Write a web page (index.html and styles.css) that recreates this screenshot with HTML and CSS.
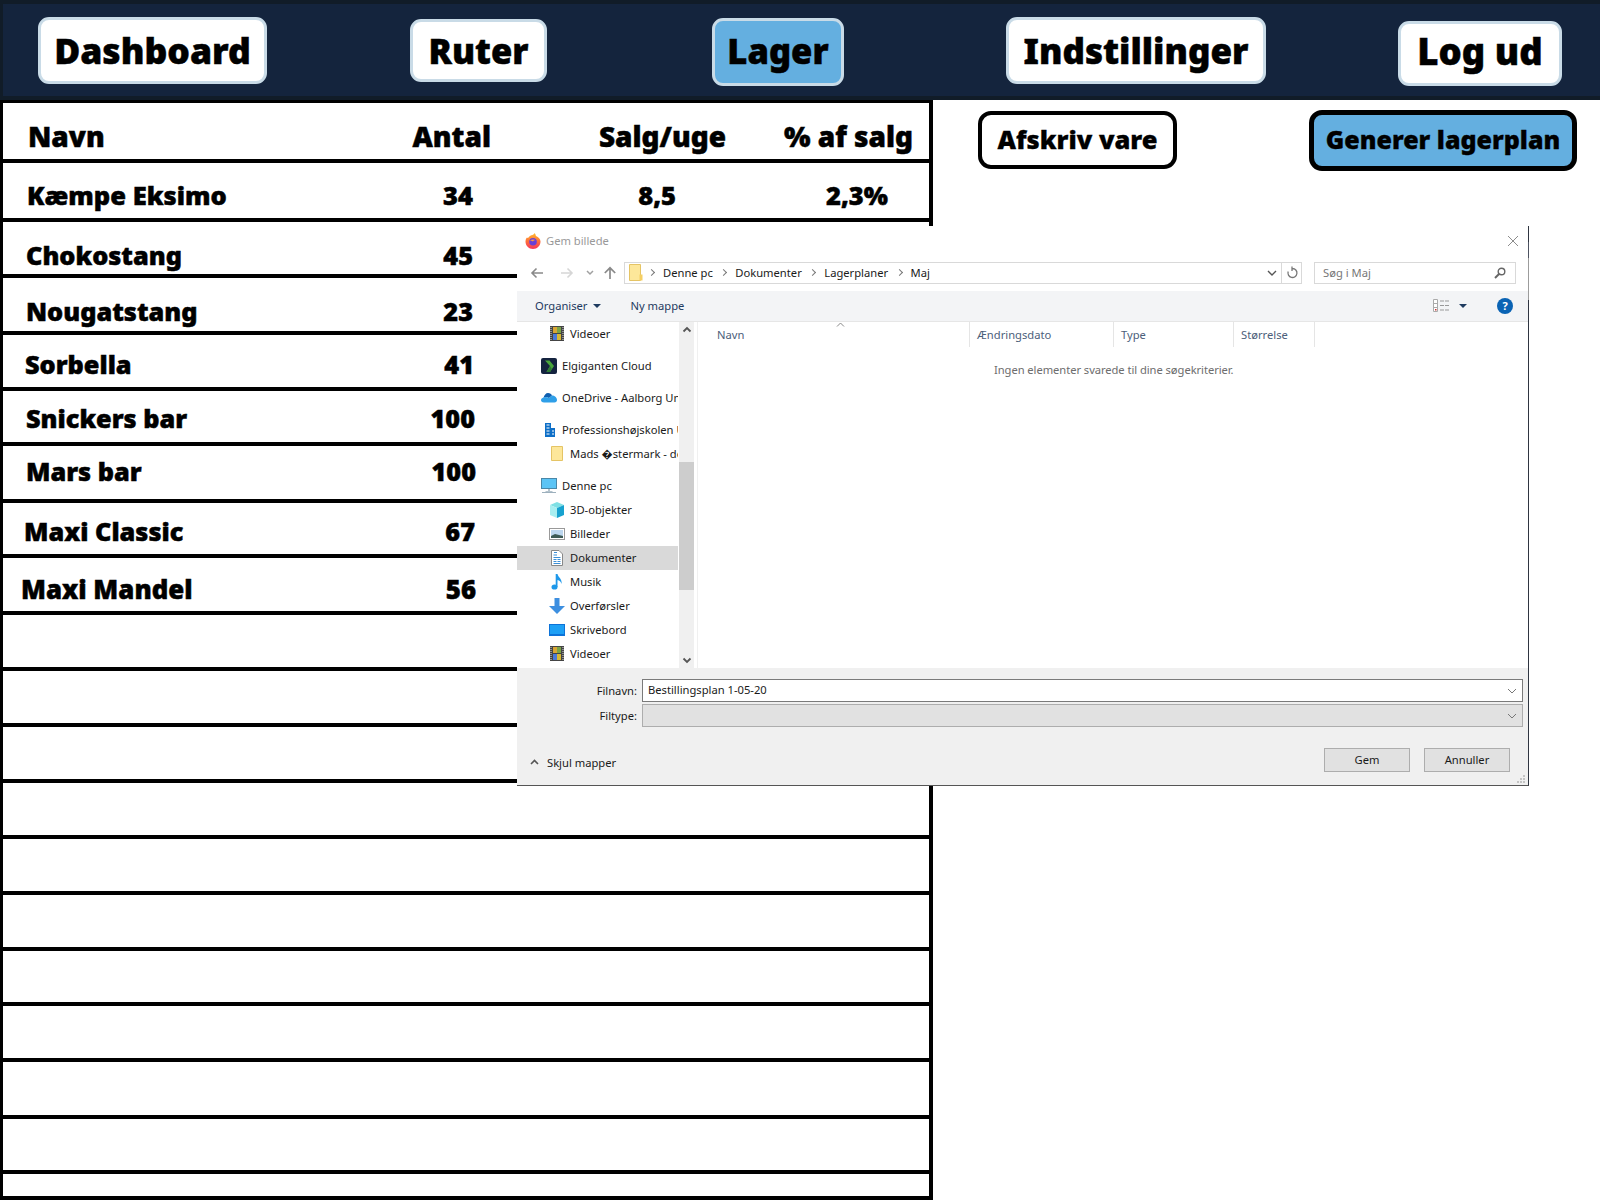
FILE: index.html
```html
<!DOCTYPE html>
<html lang="da">
<head>
    <meta charset="UTF-8">
    <title>Lager</title>
    <link rel="stylesheet" href="styles.css">
</head>
<body>

    <nav class="topbar">
        <a class="nav-btn nav-dashboard">Dashboard</a>
        <a class="nav-btn nav-ruter">Ruter</a>
        <a class="nav-btn nav-lager">Lager</a>
        <a class="nav-btn nav-settings">Indstillinger</a>
        <a class="nav-btn nav-logout">Log ud</a>
    </nav>

    <main class="content">
        <section class="stock">
            <div class="stock-head">
                <span class="head-name">Navn</span>
                <span>Antal</span>
                <span>Salg/uge</span>
                <span>% af salg</span>
            </div>
            <div class="row row-first">
                <span class="name">Kæmpe Eksimo</span>
                <span>34</span>
                <span>8,5</span>
                <span>2,3%</span>
            </div>
            <div class="row row-2"><span class="name">Chokostang</span><span>45</span></div>
            <div class="row row-3"><span class="name">Nougatstang</span><span>23</span></div>
            <div class="row row-4"><span class="name">Sorbella</span><span>41</span></div>
            <div class="row row-5"><span class="name">Snickers bar</span><span>100</span></div>
            <div class="row row-6"><span class="name">Mars bar</span><span>100</span></div>
            <div class="row row-7"><span class="name">Maxi Classic</span><span>67</span></div>
            <div class="row row-8"><span class="name">Maxi Mandel</span><span>56</span></div>
            <div class="row"></div>
            <div class="row"></div>
            <div class="row"></div>
            <div class="row"></div>
            <div class="row"></div>
            <div class="row"></div>
            <div class="row"></div>
            <div class="row"></div>
            <div class="row"></div>
            <div class="row"></div>
            <div class="row row-last"></div>
        </section>

        <aside class="actions">
            <button class="action action-writeoff">Afskriv vare</button>
            <button class="action action-plan">Generer lagerplan</button>
        </aside>
    </main>

    <div class="dialog">
        <div class="dlg-title">
            <svg class="ico" width="16" height="16" viewBox="0 0 16 16"><defs><linearGradient id="fx" x1="0" y1="0" x2="0" y2="1"><stop offset="0" stop-color="#ffbd2e"/><stop offset="0.5" stop-color="#ff7139"/><stop offset="1" stop-color="#f5365c"/></linearGradient></defs><path d="M2 4.500C2.500 5 3 5 3.500 4.600C4.500 3 6 2 7.500 2C8.800 1.500 9.500 .5 9.500 0C11 1.500 10.500 2.500 11 3C13.500 4 15.500 6 15.500 8.500C15.500 12.800 12.200 16 8 16C3.800 16 .5 12.800 .5 8.500C.5 7 1 5.500 2 4.500Z" fill="url(#fx)"/><circle cx="8" cy="8.800" r="3.800" fill="#6a3fd6"/><path d="M5 7.500C6.500 6 9.500 6 11 7.500C10 7 8.500 7.500 8 8.500C7 8 6 7.500 5 7.500Z" fill="#ff9a3c"/></svg>
            <span class="dlg-title-text">Gem billede</span>
            <svg class="dlg-close" width="12" height="12" viewBox="0 0 12 12"><path d="M1 1L11 11M11 1L1 11" stroke="#8c8c8c" fill="none"/></svg>
        </div>

        <div class="dlg-nav">
            <svg class="nav-arrow" width="14" height="12" viewBox="0 0 14 12"><path d="M13 6H2M6.500 1.500L2 6L6.500 10.500" stroke="#8a8a8a" stroke-width="1.600" fill="none"/></svg>
            <svg class="nav-arrow nav-forward" width="14" height="12" viewBox="0 0 14 12"><path d="M1 6H12M7.500 1.500L12 6L7.500 10.500" stroke="#d6d6d6" stroke-width="1.600" fill="none"/></svg>
            <svg class="nav-recent" width="8" height="6" viewBox="0 0 8 6"><path d="M1 1L4 4L7 1" stroke="#a0a0a0" stroke-width="1.500" fill="none"/></svg>
            <svg class="nav-up" width="14" height="14" viewBox="0 0 14 14"><path d="M7 13V2M1.800 7L7 1.800L12.200 7" stroke="#8a8a8a" stroke-width="1.700" fill="none"/></svg>
            <div class="address">
                <svg class="addr-folder" width="14" height="17" viewBox="0 0 14 17"><path d="M.5 .5H11.500V16.500H.5Z" fill="#fde79a" stroke="#e5c465"/><path d="M10.500 10.500H13.500V16.500H10.500Z" fill="#f5cf63"/></svg>
                <span class="crumb-sep"></span><span class="crumb">Denne pc</span>
                <span class="crumb-sep"></span><span class="crumb">Dokumenter</span>
                <span class="crumb-sep"></span><span class="crumb">Lagerplaner</span>
                <span class="crumb-sep"></span><span class="crumb">Maj</span>
                <svg class="addr-chevron" width="10" height="6" viewBox="0 0 10 6"><path d="M1 1L5 5L9 1" stroke="#555" stroke-width="1.400" fill="none"/></svg>
                <span class="addr-refresh">
                    <svg width="12" height="13" viewBox="0 0 12 13"><path d="M6.500 2.500A4.500 4.500 0 1 1 2.200 5.500M6 .5V5" stroke="#777" stroke-width="1.300" fill="none"/></svg>
                </span>
            </div>
            <div class="search">
                <span>Søg i Maj</span>
                <svg width="12" height="12" viewBox="0 0 12 12"><circle cx="7.500" cy="4.500" r="3.300" stroke="#666" stroke-width="1.400" fill="none"/><path d="M5 7L1 11" stroke="#666" stroke-width="2"/></svg>
            </div>
        </div>

        <div class="dlg-tools">
            <span class="tool">Organiser</span>
            <span class="caret"></span>
            <span class="tool tool-new">Ny mappe</span>
            <svg class="view-ico" width="17" height="13" viewBox="0 0 17 13"><path d="M.5 .5H4.500V12.500H.5ZM.5 4.500H4.500M.5 8.500H4.500" stroke="#aaa" fill="#fff"/><rect x="2" y="10" width="1.500" height="1.500" fill="#c33"/><path d="M7 2H11M12 2H16M7 6.500H11M12 6.500H16M7 11H11M12 11H16" stroke="#999"/></svg>
            <span class="caret"></span>
            <span class="help">?</span>
        </div>

        <div class="dlg-main">
            <ul class="tree">
                <li class="sub">
                    <svg width="14" height="15" viewBox="0 0 14 15"><rect width="14" height="15" fill="#444"/><path d="M1 1V14M13 1V14" stroke="#ddd" stroke-dasharray="1 1"/><rect x="3" y="1" width="4" height="6" fill="#d8a534"/><rect x="7" y="1" width="4" height="6" fill="#7aa346"/><rect x="3" y="8" width="4" height="6" fill="#4a78d8"/><rect x="7" y="8" width="4" height="6" fill="#d8b834"/></svg>
                    Videoer</li>
                <li class="top">
                    <svg width="16" height="16" viewBox="0 0 16 16"><rect width="16" height="16" rx="2" fill="#14233f"/><path d="M4 2.500H8.500L13 8L9 14H5.500L9 8Z" fill="#4aa63c"/><path d="M9 8L5.500 14H9L11 11Z" fill="#2f7a36"/></svg>
                    Elgiganten Cloud</li>
                <li class="top">
                    <svg width="16" height="11" viewBox="0 0 16 11"><path d="M2.500 6C3 3 5 1 7 1C9 1 10.500 2 11 3.500L8 6L5 5Z" fill="#0f5fb0"/><path d="M3 10.500C1 10.500 0 9.500 0 8C0 6.800 1 6 2.500 5.500L5 5L8 6L11 3.500C13.500 3.500 16 5.500 16 8C16 9.500 15 10.500 13.500 10.500Z" fill="#2f9fe8"/></svg>
                    OneDrive - Aalborg Universitet</li>
                <li class="top top-building">
                    <svg width="10" height="14" viewBox="0 0 10 14"><path d="M0 0H6V14H0ZM6 5H10V14H6Z" fill="#0e6fc7"/><path d="M1.500 2H4.500M1.500 5H4.500M1.500 8H4.500M1.500 11H4.500M7 8H9M7 11H9" stroke="#fff"/></svg>
                    Professionshøjskolen UCN</li>
                <li class="sub">
                    <svg width="14" height="15" viewBox="0 0 14 15"><path d="M1.500 .5H12.500V14.500H1.500Z" fill="#fde79a" stroke="#e5c465"/></svg>
                    Mads �stermark - dokumenter</li>
                <li class="top">
                    <svg width="16" height="15" viewBox="0 0 16 15"><rect x=".5" y=".5" width="15" height="10" fill="#5cc4f5" stroke="#4a87a8"/><path d="M1 14.500H15" stroke="#9db0bd" stroke-width="1"/><path d="M7 11H9V13H7ZM4.500 13H11.500V14H4.500Z" fill="#b4c3cd"/></svg>
                    Denne pc</li>
                <li class="sub">
                    <svg width="16" height="16" viewBox="0 0 16 16"><path d="M8 0L15 3L8 6L1 3Z" fill="#7fe0e4"/><path d="M1 3L8 6V16L1 13Z" fill="#a8eef0"/><path d="M8 6L15 3V13L8 16Z" fill="#17a2cf"/></svg>
                    3D-objekter</li>
                <li class="sub">
                    <svg width="16" height="12" viewBox="0 0 16 12"><rect x=".5" y=".5" width="15" height="11" fill="#fff" stroke="#999"/><rect x="2" y="2" width="12" height="8" fill="#bcd6ee"/><path d="M2 8L6 6L14 8V10H2Z" fill="#3d5a55"/></svg>
                    Billeder</li>
                <li class="sub active">
                    <svg width="12" height="16" viewBox="0 0 12 16"><path d="M.5 .5H8L11.500 4V15.500H.5Z" fill="#fff" stroke="#888"/><path d="M3 2.500H6M2.500 5H6M2.500 7.500H9.500M2.500 9.500H5.500M6.500 9.500H9.500M2.500 11.500H5.500M6.500 11.500H9.500M2.500 13.500H9.500" stroke="#3b8fd6"/></svg>
                    Dokumenter</li>
                <li class="sub">
                    <svg width="11" height="16" viewBox="0 0 11 16"><ellipse cx="3" cy="13" rx="3" ry="2.600" fill="#1e98ea"/><path d="M4.200 0H6C6.500 3 11 5 10 10C9.500 7.500 8 6.500 6 6V13H4.200Z" fill="#1e98ea"/></svg>
                    Musik</li>
                <li class="sub">
                    <svg width="16" height="16" viewBox="0 0 16 16"><path d="M5.500 0H10.500V8H16L8 16L0 8H5.500Z" fill="#3d8fe0"/></svg>
                    Overførsler</li>
                <li class="sub">
                    <svg width="16" height="12" viewBox="0 0 16 12"><rect width="16" height="12" fill="#0d73d8"/><rect x="1" y="1" width="14" height="9" fill="#1ea0f5"/></svg>
                    Skrivebord</li>
                <li class="sub">
                    <svg width="14" height="15" viewBox="0 0 14 15"><rect width="14" height="15" fill="#444"/><path d="M1 1V14M13 1V14" stroke="#ddd" stroke-dasharray="1 1"/><rect x="3" y="1" width="4" height="6" fill="#d8a534"/><rect x="7" y="1" width="4" height="6" fill="#7aa346"/><rect x="3" y="8" width="4" height="6" fill="#4a78d8"/><rect x="7" y="8" width="4" height="6" fill="#d8b834"/></svg>
                    Videoer</li>
            </ul>

            <div class="scrollbar">
                <svg width="10" height="7" viewBox="0 0 10 7"><path d="M1.500 5.500L5 2L8.500 5.500" stroke="#555" stroke-width="1.800" fill="none"/></svg>
                <span class="scroll-track"><span class="scroll-thumb"></span></span>
                <svg width="10" height="7" viewBox="0 0 10 7"><path d="M1.500 1.500L5 5L8.500 1.500" stroke="#555" stroke-width="1.800" fill="none"/></svg>
            </div>

            <div class="files">
                <div class="file-head">
                    <span>Navn</span>
                    <span>Ændringsdato</span>
                    <span>Type</span>
                    <span>Størrelse</span>
                    <svg class="sort-mark" width="9" height="5" viewBox="0 0 9 5"><path d="M1 4.500L4.500 1L8 4.500" stroke="#888" fill="none"/></svg>
                </div>
                <p class="no-results">Ingen elementer svarede til dine søgekriterier.</p>
            </div>
        </div>

        <div class="dlg-foot">
            <div class="field">
                <label>Filnavn:</label>
                <div class="input"><span class="input-text">Bestillingsplan 1-05-20</span>
                    <svg width="10" height="6" viewBox="0 0 10 6"><path d="M1 1L5 5L9 1" stroke="#777" fill="none"/></svg>
                </div>
            </div>
            <div class="field">
                <label>Filtype:</label>
                <div class="input input-off">
                    <svg width="10" height="6" viewBox="0 0 10 6"><path d="M1 1L5 5L9 1" stroke="#777" fill="none"/></svg>
                </div>
            </div>
            <div class="foot-bottom">
                <svg class="hide-ico" width="9" height="6" viewBox="0 0 9 6"><path d="M1 5L4.500 1.500L8 5" stroke="#555" stroke-width="1.600" fill="none"/></svg>
                <span class="hide-folders">Skjul mapper</span>
                <button class="win-btn">Gem</button>
                <button class="win-btn">Annuller</button>
            </div>
            <svg class="grip" width="10" height="10" viewBox="0 0 10 10"><path d="M7 1h2v2H7zM4 4h2v2H4zM7 4h2v2H7zM1 7h2v2H1zM4 7h2v2H4zM7 7h2v2H7z" fill="#c4c4c4"/></svg>
        </div>
    </div>

</body>
</html>
```

FILE: styles.css
```css
* {
    box-sizing: border-box;
}
html, body {
    margin: 0;
    height: 1200px;
    overflow: hidden;
    background-color: #fff;
}
body {
    position: relative;
    font-family: "Noto Sans", "Open Sans", sans-serif;
    font-weight: 900;
    color: #000;
}

/* top bar */
.topbar {
    display: flex;
    align-items: flex-start;
    height: 100px;
    padding-left: 35px;
    background-color: #14243d;
    border-top: 4px solid #111c28;
    border-left: 3px solid #111c28;
    border-bottom: 4px solid #111c28;
}
.nav-btn {
    display: flex;
    align-items: center;
    justify-content: center;
    border: 3px solid #c9dbe7;
    border-radius: 11px;
    background-color: #fff;
    font-size: 34.500px;
    line-height: 1;
    -webkit-text-stroke: 0.5px #000;
}
.nav-dashboard {
    width: 229px;
    height: 67px;
    margin-top: 13px;
    font-size: 35.500px;
}
.nav-ruter {
    width: 137px;
    height: 63px;
    margin-top: 15px;
    margin-left: 143px;
    padding-top: 1px;
}
.nav-lager {
    width: 132px;
    height: 68px;
    margin-top: 14px;
    margin-left: 165px;
    padding-bottom: 1px;
    background-color: #64afe0;
}
.nav-settings {
    width: 260px;
    height: 67px;
    margin-top: 13px;
    margin-left: 162px;
    padding-bottom: 1px;
    font-size: 35px;
}
.nav-logout {
    width: 164px;
    height: 65px;
    margin-top: 17px;
    margin-left: 132px;
    padding-bottom: 5px;
    font-size: 36.500px;
}

/* table + buttons */
.content {
    display: flex;
    align-items: flex-start;
}
.stock {
    display: grid;
    grid-template-rows: 60px 59px 56px 57px 56px 55px 57px 55px 57px 56px 56px 56px 56px 56px 56px 55px 56px 57px 55px 22px;
    width: 933px;
    height: 1100px;
    border-top: 3px solid #000;
    border-left: 3px solid #000;
    border-right: 4px solid #000;
    border-bottom: 4px solid #000;
}
.stock-head, .row {
    display: grid;
    align-items: end;
    border-bottom: 4px solid #000;
    line-height: 1;
    -webkit-text-stroke: 0.5px #000;
}
.stock-head {
    grid-template-columns: 380px 108px 235px 187px;
    padding-bottom: 9px;
    font-size: 28px;
    text-align: right;
}
.head-name {
    padding-left: 25px;
    text-align: left;
}
.row {
    grid-template-columns: 380px 90px 203px 212px;
    font-size: 25.300px;
    text-align: right;
}
.row-first {
    padding-bottom: 10px;
    font-size: 25.500px;
}
.row-last {
    border-bottom: 0;
}
.name {
    text-align: left;
}
.row-first .name { padding-left: 24px; }
.row-2 { padding-bottom: 6px; }
.row-2 .name { padding-left: 23px; }
.row-3 { padding-bottom: 7px; }
.row-3 .name { padding-left: 23px; }
.row-4 { padding-bottom: 10px; grid-template-columns: 380px 91px; }
.row-4 .name { padding-left: 22px; }
.row-5 { padding-bottom: 11px; grid-template-columns: 380px 92px; }
.row-5 .name { padding-left: 23px; }
.row-6 { padding-bottom: 15px; grid-template-columns: 380px 93px; }
.row-6 .name { padding-left: 23px; }
.row-7 { padding-bottom: 10px; grid-template-columns: 380px 92px; }
.row-7 .name { padding-left: 21px; }
.row-8 { padding-bottom: 8px; font-size: 25.800px; grid-template-columns: 380px 93px; }
.row-8 .name { padding-left: 18px; }

.actions {
    display: flex;
    align-items: flex-start;
    padding-top: 10px;
    padding-left: 45px;
}
.action {
    padding: 0 0 2px;
    font-family: inherit;
    font-weight: 900;
    font-size: 25.500px;
    color: #000;
    background-color: #fff;
    border: 4px solid #000;
    border-radius: 13px;
    -webkit-text-stroke: 0.3px #000;
}
.action-writeoff {
    width: 199px;
    height: 58px;
    margin-top: 1px;
}
.action-plan {
    width: 268px;
    height: 61px;
    margin-left: 132px;
    padding-bottom: 4px;
    border-width: 5px;
    font-size: 25px;
    background-color: #64afe0;
}

/* save dialog */
.dialog {
    position: absolute;
    left: 517px;
    top: 226px;
    width: 1012px;
    height: 560px;
    display: flex;
    flex-direction: column;
    background-color: #fff;
    border-right: 1px solid #2f3541;
    border-bottom: 1px solid #555;
    font-weight: 400;
    font-size: 11.200px;
    color: #1a1a1a;
}
.dialog::after {
    content: "";
    position: absolute;
    top: 16px;
    right: -1px;
    width: 1px;
    height: 58px;
    background: linear-gradient(#4d5361 0, #4d5361 28%, #9c9c9c 28%, #9c9c9c 100%);
}
.dlg-title {
    display: flex;
    align-items: center;
    height: 29px;
    padding-left: 8px;
    color: #999;
}
.dlg-title-text {
    margin-left: 5px;
}
.dlg-close {
    margin-left: auto;
    margin-right: 9px;
}
.dlg-nav {
    display: flex;
    align-items: center;
    height: 36px;
    padding-left: 13px;
}
.nav-forward {
    margin-left: 16px;
}
.nav-recent {
    margin-left: 12px;
}
.nav-up {
    margin-left: 9px;
}
.address {
    display: flex;
    align-items: center;
    width: 678px;
    height: 22px;
    margin-left: 7px;
    padding-left: 4px;
    padding-bottom: 1px;
    border: 1px solid #d9d9d9;
}
.addr-folder {
    margin-right: 4px;
}
.crumb-sep {
    width: 5px;
    height: 5px;
    margin: 0 9px 0 2px;
    border-top: 1px solid #777;
    border-right: 1px solid #777;
    transform: rotate(45deg);
}
.crumb {
    margin-right: 6.500px;
}
.addr-chevron {
    margin-left: auto;
    margin-right: 4px;
}
.addr-refresh {
    display: flex;
    align-items: center;
    justify-content: center;
    width: 20px;
    height: 20px;
    border-left: 1px solid #d9d9d9;
}
.search {
    display: flex;
    align-items: center;
    justify-content: space-between;
    width: 202px;
    height: 22px;
    margin-left: 12px;
    padding: 0 9px 1px 8px;
    border: 1px solid #d9d9d9;
    color: #777;
}
.dlg-tools {
    display: flex;
    align-items: center;
    height: 31px;
    padding-left: 18px;
    padding-bottom: 1px;
    background-color: #f3f4f6;
    border-bottom: 1px solid #e6e6e6;
    color: #1e3a5f;
}
.caret {
    width: 0;
    height: 0;
    margin-left: 5px;
    border-left: 4px solid transparent;
    border-right: 4px solid transparent;
    border-top: 4px solid #1e3a5f;
}
.tool-new {
    margin-left: 30px;
}
.view-ico {
    margin-left: auto;
}
.view-ico + .caret {
    margin-left: 9px;
}
.help {
    display: flex;
    align-items: center;
    justify-content: center;
    width: 16px;
    height: 16px;
    margin-left: 30px;
    margin-right: 15px;
    border-radius: 50%;
    background-color: #0a63b4;
    color: #fff;
    font-weight: 700;
    font-size: 11px;
}
.dlg-main {
    display: flex;
    height: 346px;
}
.tree {
    width: 161px;
    margin: 0 1px 0 0;
    padding: 0;
    list-style: none;
    overflow: hidden;
    white-space: nowrap;
}
.tree li {
    display: flex;
    align-items: center;
    height: 24px;
    padding-bottom: 1px;
}
.tree svg {
    flex: none;
}
.tree li.top {
    margin-top: 8px;
    padding-left: 24px;
}
.tree li.top svg {
    margin-right: 5px;
}
.tree li.top-building {
    margin-top: 8px;
    padding-left: 28px;
}
.tree li.top-building svg {
    margin-right: 7px;
}
.tree li.sub {
    padding-left: 32px;
}
.tree li.sub svg {
    width: 16px;
    margin-right: 5px;
}
.tree li.active {
    background-color: #d9d9d9;
}
.scrollbar {
    display: flex;
    flex-direction: column;
    align-items: center;
    justify-content: space-between;
    width: 15px;
    padding: 4px 0;
    background-color: #f0f0f0;
}
.scroll-track {
    flex: 1;
    width: 100%;
    padding-top: 129px;
}
.scroll-thumb {
    display: block;
    height: 128px;
    background-color: #cdcdcd;
}
.files {
    flex: 1;
    margin-left: 3px;
    border-left: 1px solid #f0f0f0;
}
.file-head {
    position: relative;
    display: grid;
    grid-template-columns: 272px 144px 120px 81px;
    height: 25px;
    color: #4c607a;
    line-height: 25px;
}
.file-head span {
    padding-left: 7px;
    border-right: 1px solid #e5e5e5;
}
.file-head span:first-child {
    padding-left: 19px;
}
.sort-mark {
    position: absolute;
    left: 138px;
    top: 0;
}
.no-results {
    margin: 15px 0 0 296px;
    letter-spacing: -0.060px;
    color: #6d6d6d;
}
.dlg-foot {
    position: relative;
    flex: 1;
    padding-top: 11px;
    background-color: #f0f0f0;
}
.field {
    display: flex;
    align-items: center;
    height: 23px;
    margin-bottom: 2px;
}
.field label {
    width: 125px;
    padding-right: 5px;
    padding-bottom: 1px;
    text-align: right;
}
.input {
    display: flex;
    align-items: center;
    justify-content: space-between;
    width: 881px;
    height: 23px;
    padding: 0 5px;
    background-color: #fff;
    border: 1px solid #7a7a7a;
}
.input-text {
    padding-bottom: 2px;
}
.input-off {
    justify-content: flex-end;
    background-color: #e1e1e1;
    border-color: #adadad;
}
.foot-bottom {
    display: flex;
    align-items: center;
    height: 24px;
    margin-top: 21px;
    padding-left: 13px;
}
.hide-ico {
    margin-top: 4px;
}
.hide-folders {
    margin-top: 4px;
    margin-left: 8px;
    margin-right: auto;
}
.win-btn {
    width: 86px;
    height: 24px;
    margin-right: 14px;
    padding: 0 0 2px;
    font-family: inherit;
    font-size: 11.200px;
    color: #1a1a1a;
    background-color: #e1e1e1;
    border: 1px solid #adadad;
}
.win-btn:last-of-type {
    margin-right: 18px;
}
.grip {
    position: absolute;
    right: 2px;
    bottom: 1px;
}
```
